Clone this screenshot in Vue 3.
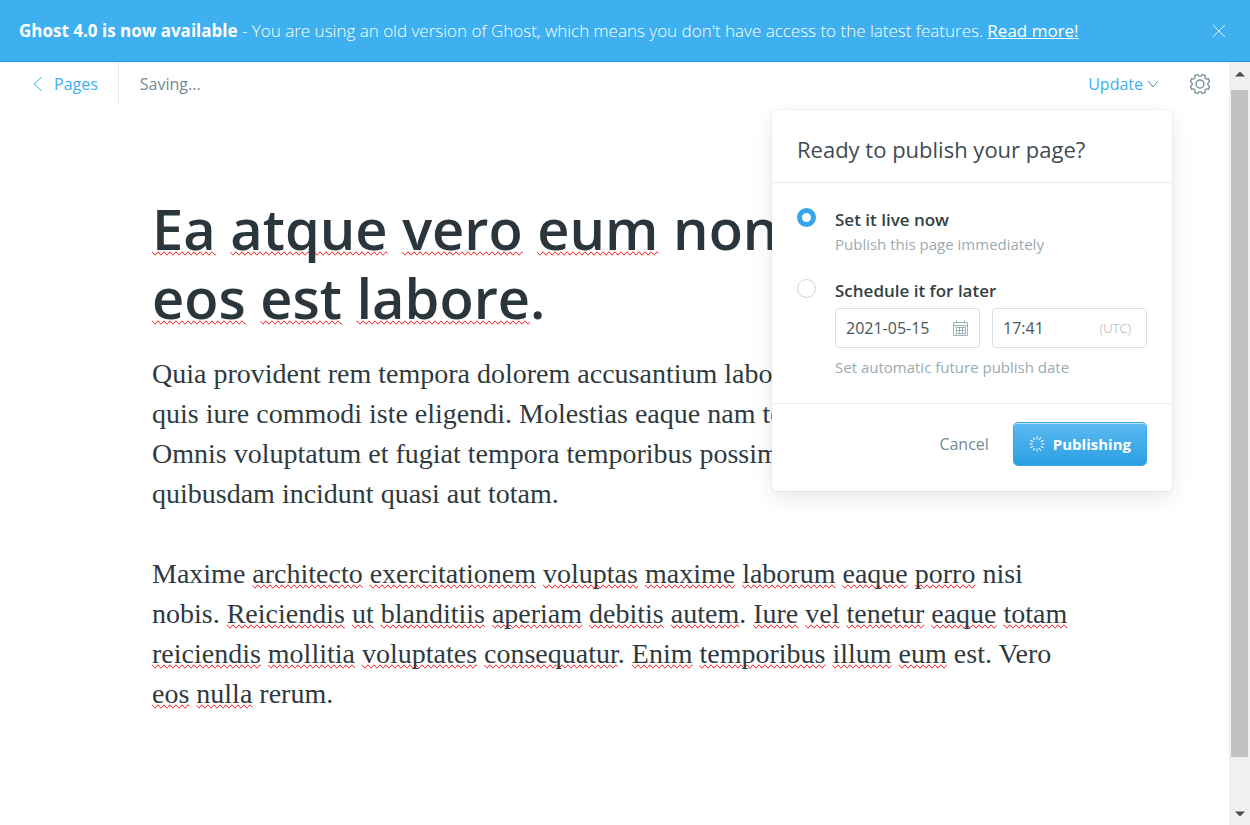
<script setup>
import { ref } from 'vue'

const publishMode = ref('now')
const date = ref('2021-05-15')
const time = ref('17:41')

// A trailing "*" marks a word the spell checker flags.
const titleLines = ['Ea* atque* vero* eum* non', 'eos* est* labore*.']
const paragraphs = [
  [
    'Quia provident rem tempora dolorem accusantium labo',
    'quis iure commodi iste eligendi. Molestias eaque nam to',
    'Omnis voluptatum et fugiat tempora temporibus possim',
    'quibusdam incidunt quasi aut totam.',
  ],
  [
    'Maxime architecto* exercitationem* voluptas* maxime* laborum* eaque* porro* nisi',
    'nobis. Reiciendis* ut* blanditiis* aperiam* debitis* autem*. Iure* vel* tenetur* eaque* totam*',
    'reiciendis* mollitia* voluptates* consequatur*. Enim* temporibus* illum* eum* est. Vero',
    'eos* nulla* rerum.',
  ],
]

const pieces = (line) =>
  line
    .split(/([A-Za-z]+\*)/)
    .filter(Boolean)
    .map((p) => (p.endsWith('*') ? { text: p.slice(0, -1), flagged: true } : { text: p, flagged: false }))

const point = (deg, r) => {
  const a = (deg * Math.PI) / 180
  return `${(11 + r * Math.cos(a)).toFixed(2)} ${(11 + r * Math.sin(a)).toFixed(2)}`
}
const teeth = Array.from({ length: 8 }, (_, i) => 22.5 + i * 45)
const gear =
  teeth
    .map((a, i) => `${i ? '' : 'M' + point(a - 9, 9.8)}L${point(a + 9, 9.8)}Q${point(a + 22.5, 5.8)} ${point(a + 36, 9.8)}`)
    .join('') + 'Z'
const rays = Array.from({ length: 12 }, (_, i) => i * 30)
</script>

<template>
  <div class="app">
    <aside class="banner">
      <p><strong>Ghost 4.0 is now available</strong> - You are using an old version of Ghost, which means you don't have access to the latest features. <a href="#">Read more!</a></p>
      <button class="close" aria-label="Close">
        <svg width="14" height="14" viewBox="0 0 14 14"><path d="M1 1l12 12M13 1L1 13" /></svg>
      </button>
    </aside>

    <div class="workspace">
      <main class="editor">
        <header class="toolbar">
          <a class="back" href="#">
            <svg width="10" height="16" viewBox="0 0 10 16"><path d="M9 1L1 8l8 7" /></svg>
            Pages
          </a>
          <span class="status">Saving...</span>
          <button class="update">
            Update
            <svg width="12" height="8" viewBox="0 0 12 8"><path d="M1 1l5 6 5-6" /></svg>
          </button>
          <button class="settings" aria-label="Settings">
            <svg width="22" height="22" viewBox="0 0 22 22"><path :d="gear" /><circle cx="11" cy="11" r="4" /></svg>
          </button>
        </header>

        <article class="post">
          <h1>
            <span v-for="line in titleLines" :key="line" class="line"><span v-for="(p, i) in pieces(line)" :key="i" :class="{ flagged: p.flagged }">{{ p.text }}</span></span>
          </h1>
          <p v-for="(lines, n) in paragraphs" :key="n">
            <span v-for="line in lines" :key="line" class="line"><span v-for="(p, i) in pieces(line)" :key="i" :class="{ flagged: p.flagged }">{{ p.text }}</span></span>
          </p>
        </article>

        <form class="popover" @submit.prevent>
          <h2>Ready to publish your page?</h2>
          <div class="options">
            <div class="option">
              <input id="mode-now" v-model="publishMode" type="radio" value="now" />
              <div class="detail">
                <label for="mode-now">Set it live now</label>
                <p>Publish this page immediately</p>
              </div>
            </div>
            <div class="option">
              <input id="mode-later" v-model="publishMode" type="radio" value="later" />
              <div class="detail">
                <label for="mode-later">Schedule it for later</label>
                <div class="fields">
                  <div class="field date">
                    <input v-model="date" type="text" aria-label="Date" />
                    <svg width="15" height="16" viewBox="0 0 15 16">
                      <path d="M.5 2.500h14v13H.5zM.5 5.500h14M2.500 7.500h10M2.500 10.500h10M2.500 13.500h10M3.500 6.500v8M6.500 6.500v8M9.500 6.500v8M12.500 6.500v8M3.500.5v3M11.500.5v3" />
                    </svg>
                  </div>
                  <div class="field time">
                    <input v-model="time" type="text" aria-label="Time" />
                    <small>(UTC)</small>
                  </div>
                </div>
                <p>Set automatic future publish date</p>
              </div>
            </div>
          </div>
          <footer>
            <button type="button" class="cancel">Cancel</button>
            <button type="submit" class="publish">
              <svg width="16" height="16" viewBox="0 0 16 16">
                <path v-for="r in rays" :key="r" d="M8 .5v3" :transform="`rotate(${r} 8 8)`" />
              </svg>
              Publishing
            </button>
          </footer>
        </form>
      </main>

      <div class="scrollbar" aria-hidden="true">
        <svg width="10" height="6" viewBox="0 0 10 6"><path d="M0 5.500L5 .5l5 5z" /></svg>
        <div class="track"><div class="thumb"></div></div>
        <svg width="10" height="6" viewBox="0 0 10 6"><path d="M0 .5l5 5 5-5z" /></svg>
      </div>
    </div>
  </div>
</template>

<style>
body {
  margin: 0;
  background: #fff;
}
</style>

<style scoped>
.app {
  display: flex;
  flex-direction: column;
  height: 100vh;
  overflow: hidden;
  color: #738a94;
  font: 16px/24px "Open Sans", "Noto Sans", sans-serif;
}
.app * {
  box-sizing: border-box;
}
h1,
h2,
p {
  margin: 0;
}
svg {
  display: block;
  flex: none;
  fill: none;
  stroke: currentColor;
}
button {
  padding: 0;
  border: 0;
  background: none;
  color: inherit;
  font: inherit;
  cursor: pointer;
}
.banner {
  display: flex;
  align-items: center;
  justify-content: space-between;
  flex: none;
  height: 62px;
  padding: 0 24px 0 19px;
  border-bottom: 1px solid #1b95dd;
  background: #3eb0ef;
  color: #fff;
  font-size: 17px;
  font-weight: 300;
  white-space: nowrap;
}
.banner strong {
  font-weight: 700;
}
.banner a {
  color: #fff;
  font-weight: 400;
}
.close {
  opacity: 0.8;
}
.workspace {
  display: flex;
  flex: 1;
  min-height: 0;
}
.editor {
  position: relative;
  flex: 1;
  min-width: 0;
  overflow: hidden;
}
.toolbar {
  display: flex;
  align-items: center;
  height: 43px;
  padding: 0 18px 0 33px;
}
.back {
  display: flex;
  align-items: center;
  gap: 11px;
  height: 43px;
  padding-right: 20px;
  border-right: 1px solid #e3edf2;
  color: #3eb0ef;
  text-decoration: none;
}
.status {
  flex: 1;
  padding-left: 21px;
}
.update {
  display: flex;
  align-items: center;
  gap: 4px;
  margin-right: 30px;
  color: #3eb0ef;
}
.update svg {
  color: #5c8ca8;
}
.settings {
  color: #738a94;
}
.settings svg {
  stroke-width: 1.3;
}
.post {
  max-width: 925px;
  margin: 0 auto;
  padding-top: 89px;
}
.line {
  display: block;
  white-space: nowrap;
}
.post h1 {
  margin-bottom: 22px;
  color: #2b363c;
  font-size: 56px;
  font-weight: 600;
  line-height: 69px;
}
.post p {
  margin-bottom: 40px;
  color: #2f3a40;
  font: 28px/40px "Liberation Serif", serif;
}
.flagged {
  text-decoration-line: spelling-error;
}
.popover {
  position: absolute;
  top: 48px;
  right: 57px;
  width: 400px;
  border-radius: 5px;
  background: #fff;
  box-shadow: 0 0 0 1px rgba(99, 114, 130, 0.08), 0 8px 20px rgba(27, 39, 51, 0.1);
}
.popover h2 {
  padding: 23px 25px 17px;
  border-bottom: 1px solid #e3edf2;
  color: #3f4b52;
  font-size: 22px;
  font-weight: 400;
  line-height: 32px;
}
.options {
  display: flex;
  flex-direction: column;
  gap: 23px;
  padding: 25px 25px 24px;
}
.option {
  display: flex;
  align-items: flex-start;
  gap: 19px;
}
.option input[type="radio"] {
  appearance: none;
  flex: none;
  width: 19px;
  height: 19px;
  margin: 0;
  border: 1px solid #c5d9e5;
  border-radius: 50%;
  background: #fff;
}
.option input[type="radio"]:checked {
  border: 5px solid #36a5e9;
}
.detail {
  flex: 1;
}
.detail label {
  display: block;
  color: #343f44;
  font-size: 17px;
  font-weight: 600;
  line-height: 24px;
}
.detail p {
  color: #9aabb3;
  font-size: 15px;
}
.fields {
  display: grid;
  grid-template-columns: 145fr 155fr;
  gap: 12px;
  margin: 5px 0 7px;
}
.field {
  display: flex;
  align-items: center;
  height: 40px;
  padding: 0 11px 0 10px;
  border: 1px solid #d2e0e8;
  border-radius: 4px;
  color: #a3b1b8;
}
.field.time {
  padding-right: 15px;
}
.field input {
  flex: 1;
  width: 0;
  padding: 0;
  border: 0;
  outline: 0;
  background: none;
  color: #4a565c;
  font: inherit;
}
.field small {
  font-size: 13px;
  font-weight: 300;
}
.popover footer {
  display: flex;
  justify-content: flex-end;
  align-items: center;
  gap: 24px;
  padding: 18px 25px 25px;
  border-top: 1px solid #e3edf2;
}
.publish {
  display: flex;
  align-items: center;
  gap: 8px;
  height: 44px;
  padding: 0 15px;
  border: 1px solid #3aa9ea;
  border-radius: 5px;
  background: linear-gradient(#5cbaf1, #2a9fe3);
  box-shadow: inset 0 1px 0 rgba(255, 255, 255, 0.6);
  color: #fff;
  font-size: 15px;
  font-weight: 700;
}
.scrollbar {
  display: flex;
  flex-direction: column;
  align-items: center;
  flex: none;
  width: 21px;
  padding: 9px 2px 8px;
  background: #f0f0f0;
  color: #4c4c4c;
}
.scrollbar svg {
  fill: currentColor;
  stroke: none;
}
.track {
  flex: 1;
  align-self: stretch;
  padding: 13px 0 54px;
}
.thumb {
  height: 100%;
  background: #c1c1c1;
}
</style>
